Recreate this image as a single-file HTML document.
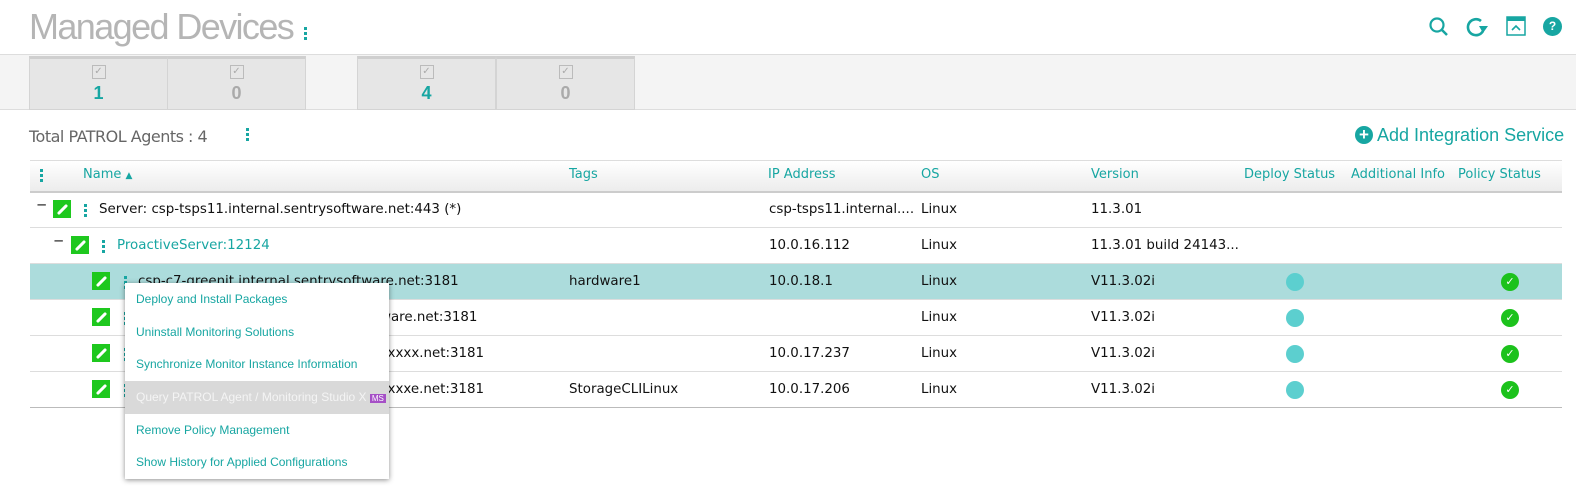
<!DOCTYPE html>
<html style="overflow:hidden"><head><style>
body{margin:0;width:1576px;height:489px;background:#fff;position:relative;overflow:hidden;font-family:"DejaVu Sans",sans-serif;}
.a{position:absolute;}
.t{color:#17a6a2;}
.dots{position:absolute;width:3px;}
.dots i{display:block;width:3px;height:3px;background:#17a6a2;margin-bottom:2px;}
.tile{position:absolute;top:56px;height:50px;width:137px;background:#e6e6e6;border-top:3px solid #cfcfcf;border-left:1px solid #d4d4d4;border-right:1px solid #d4d4d4;border-bottom:1px solid #d4d4d4;text-align:center;}
.tile .cb{width:12px;height:12px;border:1px solid #bbb;margin:6px auto 0;color:#aaa;font-size:10px;line-height:12px;}
.tile .n{font:bold 18px "Liberation Sans",sans-serif;margin-top:4px;}
.hd{position:absolute;top:160px;left:30px;width:1532px;height:30px;background:linear-gradient(#fff,#ececec);border-top:1px solid #ddd;border-bottom:2px solid #ccc;}
.hd span{position:absolute;top:6px;font-size:13px;color:#17a6a2;}
.row{position:absolute;left:30px;width:1532px;height:35px;border-bottom:1px solid #ddd;font-size:13.4px;color:#111;}
.row span{position:absolute;top:10px;white-space:nowrap;}
.ic{position:absolute;width:18px;height:18px;background:#1ec81e;top:8px;}
.ic:after{content:"";position:absolute;left:3px;top:8px;width:13px;height:3px;background:#fff;transform:rotate(-45deg);border-radius:2px;}
.dep{position:absolute;left:1256px;top:9px;width:18px;height:18px;border-radius:50%;background:#5ccfcf;}
.ok{position:absolute;left:1471px;top:9px;width:18px;height:18px;border-radius:50%;background:#1cc21c;color:#fff;font-size:11px;text-align:center;line-height:18px;}
.menu{position:absolute;left:125px;top:283px;width:264px;height:196px;background:#fff;box-shadow:0 1px 5px rgba(0,0,0,.45);font:12px "Liberation Sans",Arial,sans-serif;}
.menu div{height:32.7px;line-height:33px;padding-left:11px;color:#17a6a2;}
</style></head><body>
<div class="a" style="left:29px;top:6px;font:36px 'Liberation Sans',sans-serif;color:#b5b5b5;letter-spacing:-1.6px">Managed Devices</div>
<div class="dots" style="left:304px;top:27px"><i></i><i></i><i></i></div>
<svg class="a" style="left:1428px;top:16px" width="22" height="22"><circle cx="9" cy="9" r="6.5" fill="none" stroke="#17a6a2" stroke-width="2.2"/><line x1="14" y1="14" x2="19" y2="19" stroke="#17a6a2" stroke-width="2.5"/></svg>
<svg class="a" style="left:1466px;top:16px" width="24" height="22"><path d="M15 5 A8 8 0 1 0 17 15" fill="none" stroke="#17a6a2" stroke-width="2.6"/><path d="M13 10 L22 10 L17 17 Z" fill="#17a6a2"/></svg>
<svg class="a" style="left:1506px;top:16px" width="20" height="20"><rect x="1" y="1" width="18" height="18" fill="none" stroke="#17a6a2" stroke-width="1.5"/><rect x="1" y="1" width="18" height="4" fill="#17a6a2"/><path d="M6 14 L10 10 L14 14" fill="none" stroke="#17a6a2" stroke-width="1.6"/></svg>
<div class="a" style="left:1543px;top:17px;width:19px;height:19px;border-radius:50%;background:#17a6a2;color:#fff;font:bold 12px 'Liberation Sans';text-align:center;line-height:19px">?</div>
<div class="a" style="left:0;top:54px;width:1576px;height:54px;background:#f4f4f4;border-top:1px solid #ddd;border-bottom:1px solid #ddd"></div>
<div class="tile" style="left:29px"><div class="cb">✓</div><div class="n t">1</div></div>
<div class="tile" style="left:167px"><div class="cb">✓</div><div class="n" style="color:#aaa">0</div></div>
<div class="tile" style="left:357px"><div class="cb">✓</div><div class="n t">4</div></div>
<div class="tile" style="left:496px"><div class="cb">✓</div><div class="n" style="color:#aaa">0</div></div>
<div class="a" style="left:29px;top:127px;font:16px 'DejaVu Sans',sans-serif;color:#666;letter-spacing:-0.5px">Total PATROL Agents : 4</div>
<div class="dots" style="left:246px;top:128px"><i></i><i></i><i></i></div>
<div class="a" style="left:1355px;top:126px;width:18px;height:18px;border-radius:50%;background:#17a6a2;color:#fff;font:bold 17px 'Liberation Sans';text-align:center;line-height:18px">+</div>
<div class="a t" style="left:1377px;top:125px;font:18px 'Liberation Sans',sans-serif">Add Integration Service</div>
<div class="hd"><div class="dots" style="left:10px;top:8px"><i></i><i></i><i></i></div>
<span style="left:53px">Name <small style="font-size:9px">▲</small></span><span style="left:539px">Tags</span><span style="left:738px">IP Address</span><span style="left:891px">OS</span><span style="left:1061px">Version</span><span style="left:1214px">Deploy Status</span><span style="left:1321px">Additional Info</span><span style="left:1428px">Policy Status</span></div>
<div class="row" style="top:192px"><span style="left:6px;top:6px">−</span><div class="ic" style="left:23px"></div><div class="dots" style="left:54px;top:12px"><i></i><i></i><i></i></div><span style="left:69px">Server: csp-tsps11.internal.sentrysoftware.net:443 (*)</span><span style="left:739px">csp-tsps11.internal....</span><span style="left:891px">Linux</span><span style="left:1061px">11.3.01</span></div>
<div class="row" style="top:228px"><span style="left:23px;top:6px">−</span><div class="ic" style="left:41px"></div><div class="dots" style="left:72px;top:12px"><i></i><i></i><i></i></div><span style="left:87px;color:#17a6a2">ProactiveServer:12124</span><span style="left:739px">10.0.16.112</span><span style="left:891px">Linux</span><span style="left:1061px">11.3.01 build 24143...</span></div>
<div class="row" style="top:264px;background:#acdcdc"><div class="ic" style="left:62px"></div><div class="dots" style="left:94px;top:12px"><i></i><i></i><i></i></div><span style="left:108px">csp-c7-greenit.internal.sentrysoftware.net:3181</span><span style="left:539px">hardware1</span><span style="left:739px">10.0.18.1</span><span style="left:891px">Linux</span><span style="left:1061px">V11.3.02i</span><div class="dep"></div><div class="ok">✓</div></div>
<div class="row" style="top:300px"><div class="ic" style="left:62px"></div><div class="dots" style="left:94px;top:12px"><i></i><i></i><i></i></div><span style="left:108px">csp-xxxxxxxxxxx.internal.sentrysoftware.net:3181</span><span style="left:891px">Linux</span><span style="left:1061px">V11.3.02i</span><div class="dep"></div><div class="ok">✓</div></div>
<div class="row" style="top:336px"><div class="ic" style="left:62px"></div><div class="dots" style="left:94px;top:12px"><i></i><i></i><i></i></div><span style="left:108px">csp-xxxxxxxxxxxxxxxxxxxxxxxxxxxxxxxx.net:3181</span><span style="left:739px">10.0.17.237</span><span style="left:891px">Linux</span><span style="left:1061px">V11.3.02i</span><div class="dep"></div><div class="ok">✓</div></div>
<div class="row" style="top:372px;border-bottom:1px solid #bbb"><div class="ic" style="left:62px"></div><div class="dots" style="left:94px;top:12px"><i></i><i></i><i></i></div><span style="left:108px">csp-xxxxxxxxxxxxxxxxxxxxxxxxxxxxxxxe.net:3181</span><span style="left:539px">StorageCLILinux</span><span style="left:739px">10.0.17.206</span><span style="left:891px">Linux</span><span style="left:1061px">V11.3.02i</span><div class="dep"></div><div class="ok">✓</div></div>
<div class="menu">
<div>Deploy and Install Packages</div>
<div>Uninstall Monitoring Solutions</div>
<div>Synchronize Monitor Instance Information</div>
<div style="background:#d9d9d9;color:#f4f4f4;width:253px">Query PATROL Agent / Monitoring Studio X <span style="background:#a54fc6;color:#fff;font-size:8px;padding:0 2px">MS</span></div>
<div>Remove Policy Management</div>
<div>Show History for Applied Configurations</div>
</div>
</body></html>
